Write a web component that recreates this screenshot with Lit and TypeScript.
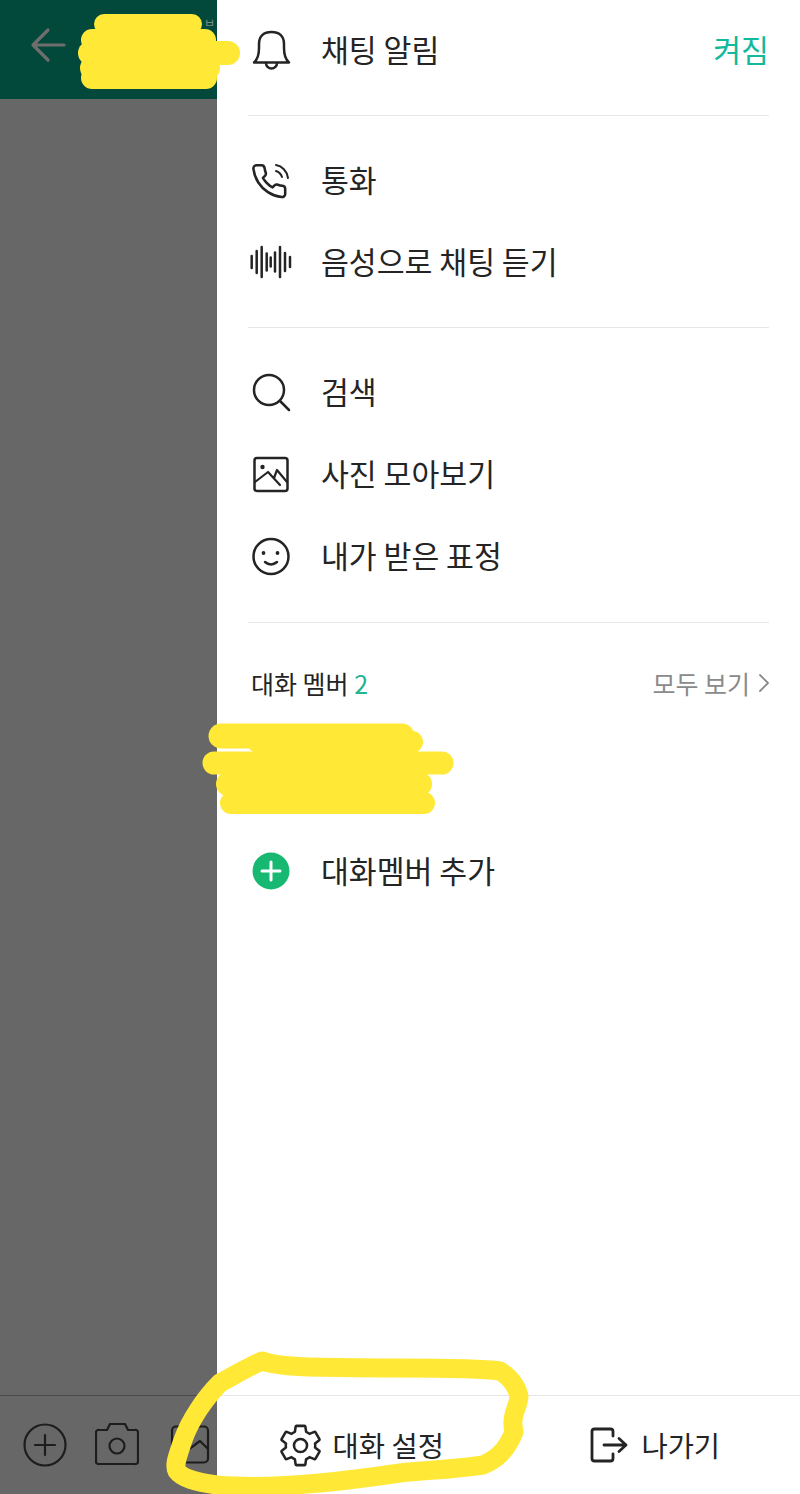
import { LitElement, html, css, svg } from "lit";
import { customElement } from "lit/decorators.js";

const wrap = (body: unknown) => html`<svg class="ic" viewBox="0 0 46 46" width="46" height="46" fill="none" stroke="currentColor" stroke-width="2.5" stroke-linecap="round" stroke-linejoin="round">${body}</svg>`;

const bell = wrap(svg`<path d="M6 35.500C10 32 11 27 11 21V17C11 9 16 5 23.500 5S36 9 36 17V21C36 27 37 32 41 35.500Z"/><path d="M18 36a5.500 5.500 0 0 0 11 0"/>`);
const phone = wrap(svg`<g transform="translate(2 5) scale(1.6)"><path stroke-width="1.6" d="M22 16.920v3a2 2 0 0 1-2.180 2 19.790 19.790 0 0 1-8.630-3.070 19.500 19.500 0 0 1-6-6 19.790 19.790 0 0 1-3.070-8.670A2 2 0 0 1 4.110 2h3a2 2 0 0 1 2 1.720 12.840 12.840 0 0 0 .7 2.810 2 2 0 0 1-.45 2.110L8.090 9.910a16 16 0 0 0 6 6l1.270-1.270a2 2 0 0 1 2.110-.45 12.840 12.840 0 0 0 2.810.7A2 2 0 0 1 22 16.920z"/></g><path stroke-width="2" d="M28 8C34 9 39 14 40 21"/><path stroke-width="2" d="M28 14C31 15 33 17 34 20"/>`);
const bars: [number, number][] = [[3.7, 12], [8.7, 22], [13.7, 30], [18.7, 17], [22.7, 9], [27, 19], [32, 30], [37, 18], [42, 10]];
const wave = wrap(svg`${bars.map(([x, h]) => svg`<line x1=${x} x2=${x} y1=${23 - h / 2} y2=${23 + h / 2}/>`)}`);
const search = wrap(svg`<circle cx="21" cy="21" r="15"/><line x1="32" y1="32" x2="41" y2="41"/>`);
const photo = wrap(svg`<rect x="6.500" y="7" width="33" height="33" rx="2.500"/><circle cx="14.500" cy="16" r="2.200" fill="currentColor" stroke="none"/><path d="M7 31L20 21L32 34M26 27L29 19L39 31" stroke-width="2.200"/>`);
const smile = wrap(svg`<circle cx="23" cy="23.500" r="17.500"/><circle cx="15.500" cy="20" r="1.900" fill="currentColor" stroke="none"/><circle cx="29.500" cy="20" r="1.900" fill="currentColor" stroke="none"/><path d="M17 29Q23 34 29 29"/>`);
const add = html`<svg class="ic" viewBox="0 0 46 46" width="46" height="46"><circle cx="23" cy="23" r="18.500" fill="#17b972"/><path d="M23 14V32M14 23H32" stroke="#fff" stroke-width="3" stroke-linecap="round"/></svg>`;
const gear = html`<svg class="gear" viewBox="0 0 24 24" width="49" height="49" fill="none" stroke="currentColor" stroke-width="1.250" stroke-linejoin="round"><path d="M19.140 12.940c.04-.3.06-.61.06-.94 0-.32-.02-.64-.07-.94l2.030-1.580a.49.49 0 0 0 .12-.61l-1.920-3.320a.488.488 0 0 0-.59-.22l-2.390.96c-.5-.38-1.030-.7-1.620-.94l-.36-2.540a.484.484 0 0 0-.48-.41h-3.840c-.24 0-.43.17-.47.41l-.36 2.540c-.59.24-1.130.57-1.620.94l-2.390-.96c-.22-.08-.47 0-.59.22L2.740 8.870c-.12.21-.08.47.12.61l2.030 1.580c-.05.3-.09.63-.09.94s.02.64.07.94l-2.030 1.580a.49.49 0 0 0-.12.61l1.920 3.320c.12.22.37.29.59.22l2.390-.96c.5.38 1.030.7 1.620.94l.36 2.540c.05.24.24.41.48.41h3.840c.24 0 .44-.17.47-.41l.36-2.540c.59-.24 1.130-.56 1.620-.94l2.390.96c.22.08.47 0 .59-.22l1.920-3.320c.12-.22.07-.47-.12-.61l-2.010-1.580z"/><circle cx="12" cy="12" r="3.200"/></svg>`;
const exit = html`<svg viewBox="0 0 40 40" width="40" height="40" fill="none" stroke="currentColor" stroke-width="2.800" stroke-linecap="round" stroke-linejoin="round"><path d="M25 11V6.500a2.500 2.500 0 0 0-2.500-2.500H6.500A2.500 2.500 0 0 0 4 6.500V33.500A2.500 2.500 0 0 0 6.500 36H22.500A2.500 2.500 0 0 0 25 33.500V29"/><path d="M16 20H38M31 13.500L38 20L31 26.500"/></svg>`;

const yellowStrokes: [string, number][] = [
  ["M104 24H192", 20],
  ["M92 40H205", 22],
  ["M90 53H228", 24],
  ["M92 68H208", 24],
  ["M92 78H206", 22],
  ["M221 736H402", 25],
  ["M258 742H412", 22],
  ["M214 763H442", 23],
  ["M228 784H420", 24],
  ["M231 803H424", 22],
  ["M262 1361C285 1369 330 1367 400 1368C440 1368 480 1368 500 1371C513 1379 518 1390 519 1397C518 1408 510 1415 514 1432C506 1452 495 1460 483 1465C450 1470 425 1470 400 1473C340 1482 270 1490 217 1485C195 1482 182 1478 177 1471C174 1465 177 1458 183 1440C190 1420 205 1398 220 1383C235 1375 250 1366 262 1361Z", 19],
];

@customElement("app-root")
export class AppRoot extends LitElement {
  static styles = css`
    :host {
      display: block;
      position: relative;
      width: 800px;
      height: 1494px;
      overflow: hidden;
      font-family: "Noto Sans CJK KR", "Noto Sans", sans-serif;
      color: #242424;
      background: #fff;
    }
    .screen { display: grid; grid-template-columns: 217px 1fr; height: 100%; }
    .chat { display: flex; flex-direction: column; background: #676767; overflow: hidden; }
    .chat-head { height: 99px; box-sizing: border-box; background: #02493b; display: flex; align-items: flex-start; padding: 27px 0 0 30px; color: #6e6e6e; flex: none; }
    .back { flex: none; }
    .ghost { margin: -10px 0 0 138px; font-size: 12px; line-height: 1; color: #7c8a85; white-space: nowrap; }
    .chat-body { flex: 1; }
    .composer { height: 98px; border-top: 1px solid #4a4a4a; display: flex; align-items: center; gap: 28px; padding-left: 23px; color: #1d1d1d; flex: none; }
    .composer svg { flex: none; }
    .drawer { display: flex; flex-direction: column; background: #fff; }
    .group { margin: 0 31px; border-bottom: 1px solid #e6e6e6; }
    .alarm { height: 115px; }
    .alarm .row { height: 100px; }
    .g2 { padding: 23px 0 24px; }
    .g3 { padding: 23px 0 25px; }
    .row { display: flex; align-items: center; height: 82px; gap: 27px; font-size: 30.300px; line-height: 1; white-space: nowrap; }
    .row span { padding-bottom: 2px; }
    .ic { flex: none; }
    .row .state { margin-left: auto; color: #12b99b; }
    .members { margin: 39px 31px 0; }
    .members-head { height: 44px; box-sizing: border-box; padding: 0 0 2px 3px; display: flex; align-items: center; justify-content: space-between; font-size: 25px; white-space: nowrap; }
    .count { color: #22b38f; }
    .all { display: flex; align-items: center; gap: 9px; color: #8a8a8a; }
    .all svg { flex: none; }
    .member-list { height: 124px; }
    .footer { margin-top: auto; height: 98px; border-top: 1px solid #e6e6e6; display: grid; grid-template-columns: 1fr 1fr; flex: none; }
    .action { display: flex; align-items: center; justify-content: center; gap: 13px; font-size: 28.500px; line-height: 1; white-space: nowrap; }
    .action.settings { gap: 8px; padding-right: 6px; }
    .gear { flex: none; }
    .paint { position: absolute; inset: 0; pointer-events: none; }
  `;

  render() {
    return html`
      <div class="screen">
        <section class="chat">
          <header class="chat-head">
            <svg class="back" viewBox="0 0 36 36" width="36" height="36" fill="none" stroke="currentColor" stroke-width="3.200" stroke-linecap="round" stroke-linejoin="round"><path d="M34 18H4M18 3L3 18L18 33"/></svg>
            <span class="ghost">ㅂ</span>
          </header>
          <div class="chat-body"></div>
          <footer class="composer">
            <svg viewBox="0 0 44 44" width="44" height="44" fill="none" stroke="currentColor" stroke-width="2.200" stroke-linecap="round"><circle cx="22" cy="22" r="20.500"/><path d="M22 12V32M12 22H32"/></svg>
            <svg viewBox="0 0 44 44" width="44" height="44" fill="none" stroke="currentColor" stroke-width="2.200" stroke-linejoin="round"><path d="M4 7H12L15 1H30L33 7H40A2.500 2.500 0 0 1 43 9.500V38A2.500 2.500 0 0 1 40 41H4A2.500 2.500 0 0 1 1 38V9.500A2.500 2.500 0 0 1 4 7Z"/><circle cx="22" cy="23" r="7.500"/></svg>
            <svg viewBox="0 0 44 44" width="44" height="44" fill="none" stroke="currentColor" stroke-width="2.200" stroke-linejoin="round"><rect x="5" y="3.500" width="36" height="36" rx="4"/><path d="M5 37L25 24L33 18L41 26"/></svg>
          </footer>
        </section>
        <aside class="drawer">
          <div class="group alarm">
            <div class="row">${bell}<span>채팅 알림</span><span class="state">켜짐</span></div>
          </div>
          <div class="group g2">
            <div class="row">${phone}<span>통화</span></div>
            <div class="row">${wave}<span>음성으로 채팅 듣기</span></div>
          </div>
          <div class="group g3">
            <div class="row">${search}<span>검색</span></div>
            <div class="row">${photo}<span>사진 모아보기</span></div>
            <div class="row">${smile}<span>내가 받은 표정</span></div>
          </div>
          <div class="members">
            <div class="members-head">
              <span>대화 멤버 <span class="count">2</span></span>
              <span class="all">모두 보기
                <svg viewBox="0 0 10 18" width="10" height="18" fill="none" stroke="currentColor" stroke-width="1.800" stroke-linecap="round" stroke-linejoin="round"><path d="M1 1L9 9L1 17"/></svg>
              </span>
            </div>
            <div class="member-list"></div>
            <div class="row">${add}<span>대화멤버 추가</span></div>
          </div>
          <footer class="footer">
            <div class="action settings">${gear}<span>대화 설정</span></div>
            <div class="action">${exit}<span>나가기</span></div>
          </footer>
        </aside>
      </div>
      <svg class="paint" viewBox="0 0 800 1494" width="800" height="1494" fill="none" stroke="#ffe936" stroke-linecap="round" stroke-linejoin="round">
        ${yellowStrokes.map(([d, w]) => svg`<path d=${d} stroke-width=${w}/>`)}
      </svg>
    `;
  }
}
